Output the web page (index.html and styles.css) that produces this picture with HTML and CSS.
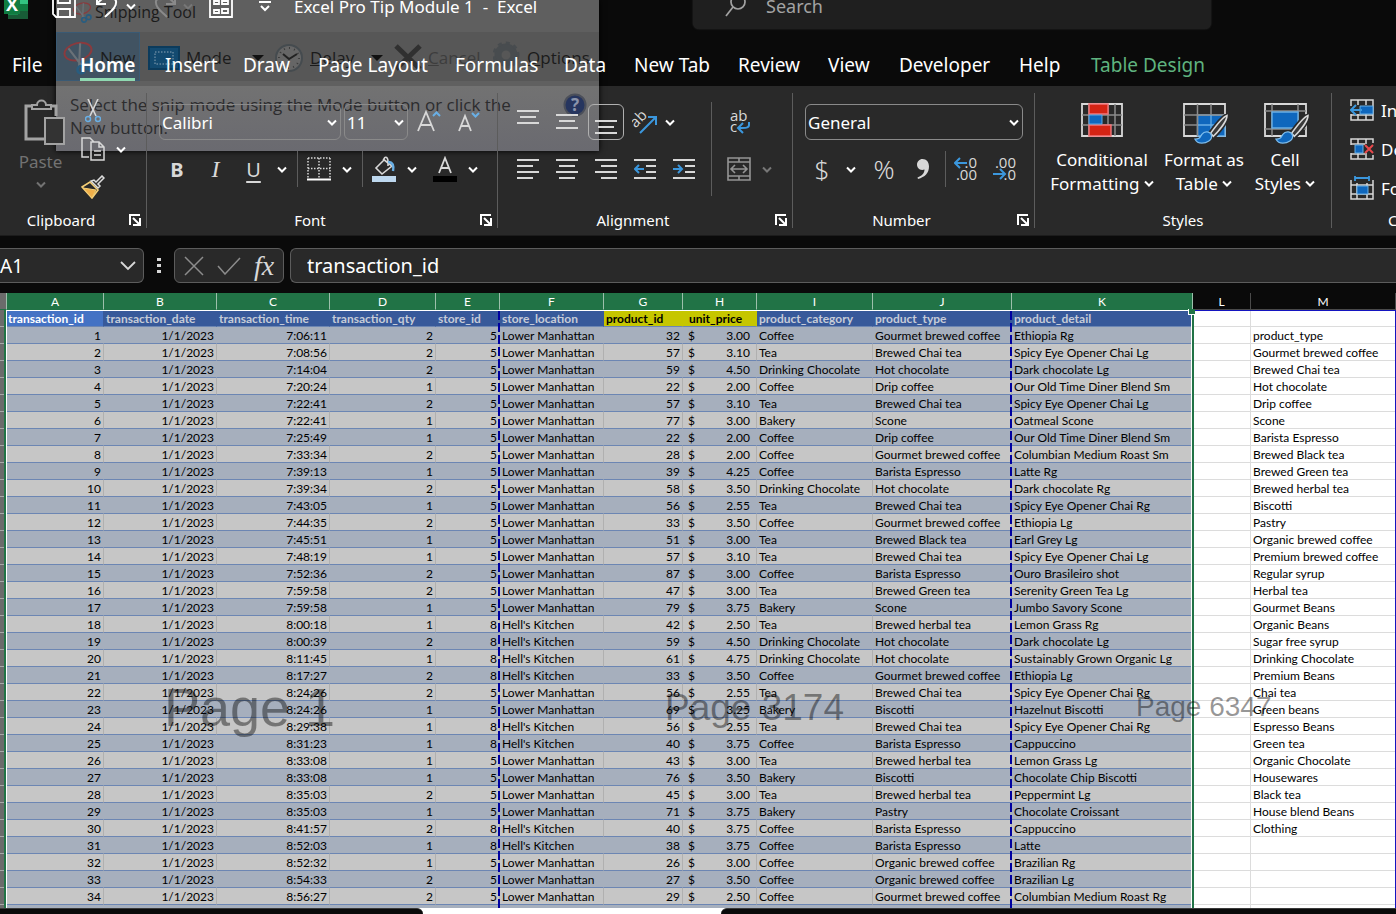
FILE: index.html
```html
<!DOCTYPE html>
<html lang="en">
<head>
<meta charset="utf-8">
<title>Excel Pro Tip Module 1 - Excel</title>
<link rel="stylesheet" href="styles.css">
</head>
<body>
<svg class="defs" aria-hidden="true">
  <symbol id="chev" viewBox="0 0 10 7"><path d="M1 1.500l4 4 4-4" fill="none" stroke="currentColor" stroke-width="2"/></symbol>
  <symbol id="launch" viewBox="0 0 12 12"><path d="M1 11V1h10M4 4l6 6M11 4v7H4" fill="none" stroke="#fff" stroke-width="2"/></symbol>
  <symbol id="brush" viewBox="0 0 36 32"><path d="M35 1C31 1 22 12 17 19l4 4C27 17 36 5 35 1z" fill="#292929" stroke="#292929" stroke-width="4"/><path d="M34 1.500C30 3 22 13 17 20l3 3C26 17 34 7 34 1.500z" fill="#3a3a3a" stroke="#d8d8d8" stroke-width="1.600"/><path d="M1 26c5 0 5-2 7-5 3-4 9-3 10 1 1 5-5 8-10 8-4 0-6-2-7-4z" fill="#0f67bd" stroke="#7cbcec" stroke-width="1.300"/></symbol>
  <symbol id="snip" viewBox="0 0 30 34"><ellipse cx="15" cy="11" rx="13" ry="8" transform="rotate(-14 15 11)" fill="none" stroke="#8b3a3d" stroke-width="1.800"/><path d="M6 8l13 17M17 3l-1 22" stroke="#6a7278" stroke-width="2"/><circle cx="18" cy="28" r="3.500" fill="none" stroke="#285d80" stroke-width="2.400"/><circle cx="25" cy="24" r="3.500" fill="none" stroke="#285d80" stroke-width="2.400"/></symbol>
</svg>

<aside class="snip" aria-label="Snipping Tool">
  <div class="snip-title"><svg width="20" height="23"><use href="#snip"/></svg><span>Snipping Tool</span></div>
  <div class="snip-bar">
    <button class="snip-btn snip-new"><svg width="32" height="36"><use href="#snip"/></svg>New</button>
    <button class="snip-btn snip-mode"><svg width="32" height="24" viewBox="0 0 32 24"><rect width="32" height="24" fill="#0c3b5c"/><rect x="2" y="2" width="28" height="20" fill="#134a70"/><rect x="7" y="6" width="18" height="12" fill="none" stroke="#8aa3b5" stroke-dasharray="1.500 1.500"/></svg>Mode<i class="tri"></i></button>
    <button class="snip-btn snip-delay"><svg width="30" height="30" viewBox="0 0 30 30"><circle cx="15" cy="15" r="13" fill="#666" stroke="#454b4f" stroke-width="2"/><circle cx="15" cy="15" r="10" fill="none" stroke="#3a3a3a" stroke-width="2" stroke-dasharray="1 4.200"/><path d="M9 11l6 5 8-5" fill="none" stroke="#222" stroke-width="2"/></svg><span><u>D</u>elay</span><i class="tri"></i></button>
    <button class="snip-btn snip-cancel"><svg width="28" height="29" viewBox="0 0 28 29"><path d="M2 3l24 23M26 3L2 26" stroke="#303030" stroke-width="5"/></svg><span><u>C</u>ancel</span></button>
    <button class="snip-btn snip-options"><svg width="28" height="34" viewBox="0 0 28 34"><circle cx="13" cy="14" r="8" fill="none" stroke="#484c4f" stroke-width="7"/><circle cx="13" cy="14" r="12" fill="none" stroke="#484c4f" stroke-width="3" stroke-dasharray="4 4"/></svg><span><u>O</u>ptions</span></button>
  </div>
  <div class="snip-body">
    <p>Select the snip mode using the Mode button or click the New button.</p>
    <svg width="24" height="24" viewBox="0 0 24 24"><circle cx="12" cy="12" r="10.500" fill="#26355f" stroke="#4b4f5a" stroke-width="2"/><text x="12" y="18" text-anchor="middle" class="help-mark">?</text></svg>
  </div>
</aside>

<header class="titlebar">
  <svg class="logo" width="24" height="30" viewBox="0 0 24 30"><path d="M8 0h16v28H4V16z" fill="#185c37"/><path d="M14 0h10v13H14z" fill="#33c481"/><path d="M14 13h10v7H14z" fill="#107c41"/><path d="M4 19h10v5H4z" fill="#17864b"/><rect width="16" height="23" fill="#107c41"/><text x="8" y="20" text-anchor="middle" class="logo-x">X</text></svg>
  <svg class="t-save" width="24" height="24" viewBox="0 0 24 24"><path d="M1 1h18l4 4v18H4l-3-3zM6 1v8h12V1M6 23v-8h12v8" fill="none" stroke="#fff" stroke-width="1.800"/></svg>
  <svg class="t-undo" width="24" height="24" viewBox="0 0 24 24"><path d="M2 2v8h9M2 10C10 0 18 1 21 7c1 6-5 10-11 16" fill="none" stroke="#fff" stroke-width="2"/></svg>
  <svg class="ch" width="10" height="7"><use href="#chev"/></svg>
  <svg class="t-redo" width="24" height="24" viewBox="0 0 24 24"><path d="M22 2v8h-9M22 10C14 0 6 1 3 7c-1 6 5 10 11 16" fill="none" stroke="#8a8a8a" stroke-width="2"/></svg>
  <svg class="ch dim" width="10" height="7"><use href="#chev"/></svg>
  <svg class="t-form" width="24" height="24" viewBox="0 0 24 24"><path d="M1 1h22v22H1zM5 7h5v3H5zM13 7h6v3h-6zM5 16h5v3H5zM13 15h6v4h-6z" fill="none" stroke="#fff" stroke-width="1.800"/></svg>
  <svg class="t-more" width="12" height="11" viewBox="0 0 12 11"><path d="M0 1h12M2 5l4 4 4-4" fill="none" stroke="#fff" stroke-width="2"/></svg>
  <h1>Excel Pro Tip Module 1 &nbsp;- &nbsp;Excel</h1>
  <label class="search"><svg width="22" height="24" viewBox="0 0 22 24"><circle cx="13" cy="8" r="7" fill="none" stroke="#a3a3a3" stroke-width="1.700"/><path d="M8 13l-7 9" stroke="#a3a3a3" stroke-width="1.700"/></svg><input type="text" placeholder="Search" aria-label="Search"></label>
</header>

<nav class="tabs">
  <button>File</button><button class="active">Home</button><button>Insert</button><button>Draw</button><button>Page Layout</button><button>Formulas</button><button>Data</button><button>New Tab</button><button>Review</button><button>View</button><button>Developer</button><button>Help</button><button class="ctx">Table Design</button>
</nav>

<main class="ribbon">
  <section class="group clipboard">
    <div class="content">
      <button class="paste"><svg width="42" height="46" viewBox="0 0 42 46"><path d="M8 7H2v33h18M26 7h6v10" fill="none" stroke="#a3a3a3" stroke-width="3"/><path d="M8 10V6h5c0-6 9-6 9 0h5v4z" fill="none" stroke="#a3a3a3" stroke-width="2"/><path d="M21 19h19v26H21z" fill="#333" stroke="#a3a3a3" stroke-width="2"/></svg><span>Paste</span><svg class="ch" width="10" height="7"><use href="#chev"/></svg></button>
      <div class="clip-tools">
        <button aria-label="Cut"><svg width="16" height="24" viewBox="0 0 16 24"><path d="M3 0l8 17M13 0L5 17" stroke="#d8d8d8" stroke-width="1.600"/><circle cx="3" cy="20" r="2.500" fill="none" stroke="#69afe5" stroke-width="1.500"/><circle cx="13" cy="20" r="2.500" fill="none" stroke="#69afe5" stroke-width="1.500"/></svg></button>
        <button aria-label="Copy"><svg width="24" height="24" viewBox="0 0 24 24"><path d="M8 20H1V1h8l4 4M10 5h8l5 5v13H10zM18 5v5h5M13 14h7M13 18h7" fill="none" stroke="#d8d8d8" stroke-width="1.500"/></svg><svg class="ch" width="10" height="7"><use href="#chev"/></svg></button>
        <button aria-label="Format Painter"><svg width="24" height="24" viewBox="0 0 24 24"><path d="M1 12l8-5 8 8-6 8z" fill="#292929" stroke="#f5cf76" stroke-width="1.600"/><path d="M2 13l13 2-4 8z" fill="#f0b04a" stroke="#f5cf76"/><path d="M10 6l7 7 2-2-2-2 6-6-2-2-6 6-2-2z" fill="#333" stroke="#ddd" stroke-width="1.500"/></svg></button>
      </div>
    </div>
    <footer><span>Clipboard</span><button aria-label="Clipboard options"><svg width="12" height="12"><use href="#launch"/></svg></button></footer>
  </section>

  <section class="group font">
    <div class="content stack">
      <div class="row font-1">
        <span class="combo"><select aria-label="Font"><option>Calibri</option></select><svg class="ch" width="10" height="7"><use href="#chev"/></svg></span>
        <span class="combo"><select aria-label="Font size"><option>11</option></select><svg class="ch" width="10" height="7"><use href="#chev"/></svg></span>
        <button aria-label="Increase font size"><svg width="24" height="24" viewBox="0 0 24 24"><path d="M1 21L9 2l8 19M4 15h10" fill="none" stroke="#d8d8d8" stroke-width="1.800"/><path d="M16 6l3.500-3.500L23 6" fill="none" stroke="#69afe5" stroke-width="2"/></svg></button>
        <button aria-label="Decrease font size"><svg width="24" height="24" viewBox="0 0 24 24"><path d="M3 21L9 6l6 15M5 16h8" fill="none" stroke="#d8d8d8" stroke-width="1.800"/><path d="M16 3l3.500 3.500L23 3" fill="none" stroke="#69afe5" stroke-width="2"/></svg></button>
      </div>
      <div class="row font-2">
        <button class="glyph b">B</button><button class="glyph i">I</button><button class="glyph u">U</button><svg class="ch" width="10" height="7"><use href="#chev"/></svg>
        <i class="bar"></i>
        <button aria-label="Borders"><svg width="24" height="24" viewBox="0 0 24 24"><path d="M1 1h22M1 1v20M23 1v20M12 1v20M1 11.500h22" fill="none" stroke="#d8d8d8" stroke-width="1.500" stroke-dasharray="1.500 1.500"/><path d="M0 22.500h24" stroke="#fff" stroke-width="2"/></svg></button><svg class="ch" width="10" height="7"><use href="#chev"/></svg>
        <i class="bar"></i>
        <button aria-label="Fill color"><svg width="24" height="26" viewBox="0 0 24 26"><path d="M11 3l9 7-10 8-6-6 8-8c0-4 4-4 4 2v4" fill="none" stroke="#d8d8d8" stroke-width="1.600"/><path d="M16 6c5 0 6 4 5 9" fill="none" stroke="#69afe5" stroke-width="2.500"/><path d="M0 20h24v6H0z" fill="#bdd7ee"/></svg></button><svg class="ch" width="10" height="7"><use href="#chev"/></svg>
        <button aria-label="Font color"><svg width="24" height="26" viewBox="0 0 24 26"><path d="M6 17l6-15 6 15M8 12h8" fill="none" stroke="#d8d8d8" stroke-width="1.800"/><path d="M0 20h24v6H0z" fill="#000"/></svg></button><svg class="ch" width="10" height="7"><use href="#chev"/></svg>
      </div>
    </div>
    <footer><span>Font</span><button aria-label="Font options"><svg width="12" height="12"><use href="#launch"/></svg></button></footer>
  </section>

  <section class="group alignment">
    <div class="content">
      <div class="stack">
        <div class="row al-1">
          <button aria-label="Top align"><svg class="ln" width="22" height="24" viewBox="0 0 22 24"><path d="M0 1h22M3 7h16M0 13h22"/></svg></button>
          <button aria-label="Middle align"><svg class="ln" width="22" height="24" viewBox="0 0 22 24"><path d="M0 5h22M3 11h16M0 18h22"/></svg></button>
          <button class="on" aria-label="Bottom align"><svg class="ln" width="22" height="24" viewBox="0 0 22 24"><path d="M0 11h22M3 17h16M0 23h22"/></svg></button>
          <button aria-label="Orientation"><svg width="25" height="25" viewBox="0 0 25 25"><text x="3" y="17" transform="rotate(-45 5 17)" class="ab">ab</text><path d="M8 23L23 8M16 7h8v8" fill="none" stroke="#3b97dd" stroke-width="2"/></svg></button>
          <svg class="ch" width="10" height="7"><use href="#chev"/></svg>
        </div>
        <div class="row al-2">
          <button aria-label="Align left"><svg class="ln" width="22" height="20" viewBox="0 0 22 20"><path d="M0 1h22M0 7h16M0 13h22M0 19h16"/></svg></button>
          <button aria-label="Center"><svg class="ln" width="22" height="20" viewBox="0 0 22 20"><path d="M0 1h22M3 7h16M0 13h22M3 19h16"/></svg></button>
          <button aria-label="Align right"><svg class="ln" width="22" height="20" viewBox="0 0 22 20"><path d="M0 1h22M6 7h16M0 13h22M6 19h16"/></svg></button>
          <button aria-label="Decrease indent"><svg class="ln" width="22" height="20" viewBox="0 0 22 20"><path d="M0 1h22M12 7h10M12 13h10M0 19h22"/><path class="blue" d="M10 10H1M5 6l-4 4 4 4"/></svg></button>
          <button aria-label="Increase indent"><svg class="ln" width="22" height="20" viewBox="0 0 22 20"><path d="M0 1h22M12 7h10M12 13h10M0 19h22"/><path class="blue" d="M0 10h9M5 6l4 4-4 4"/></svg></button>
        </div>
      </div>
      <i class="bar tall"></i>
      <div class="stack">
        <div class="row al-3"><button aria-label="Wrap text"><svg width="22" height="26" viewBox="0 0 22 26"><text x="2" y="12" class="ab">ab</text><text x="2" y="23" class="ab">c</text><path d="M21 13v3c0 3-3 3-10 3M15 14l-5 5 5 5" fill="none" stroke="#3b97dd" stroke-width="2"/></svg></button></div>
        <div class="row al-3"><button aria-label="Merge"><svg width="24" height="24" viewBox="0 0 24 24"><path d="M1 1h22v22H1zM1 5h22M1 19h22M12 1v4M12 19v4M4 12h16M8 8l-4 4 4 4M16 8l4 4-4 4" fill="none" stroke="#949494" stroke-width="1.600"/></svg></button><svg class="ch dim" width="10" height="7"><use href="#chev"/></svg></div>
      </div>
    </div>
    <footer><span>Alignment</span><button aria-label="Alignment options"><svg width="12" height="12"><use href="#launch"/></svg></button></footer>
  </section>

  <section class="group number">
    <div class="content stack">
      <div class="row"><span class="combo wide"><select aria-label="Number format"><option>General</option></select><svg class="ch" width="10" height="7"><use href="#chev"/></svg></span></div>
      <div class="row num-2">
        <button class="glyph big">$</button><svg class="ch" width="10" height="7"><use href="#chev"/></svg><button class="glyph big">%</button>
        <button aria-label="Comma style"><svg width="12" height="20" viewBox="0 0 12 20"><path d="M5.500 0C9.500 0 12 3 12 7.500 12 14 8 18 1 20l-.5-1.500C5 17 7.500 14 7.500 10.500 3 12 0 9 0 5.500 0 2.500 2.500 0 5.500 0z" fill="#d8d8d8"/></svg></button>
        <i class="bar"></i>
        <button aria-label="Increase decimal"><svg width="24" height="26" viewBox="0 0 24 26"><text x="23" y="12" text-anchor="end" class="dec">.0</text><text x="23" y="24" text-anchor="end" class="dec">.00</text><path d="M13 7H1M6 2L1 7l5 5" fill="none" stroke="#3b97dd" stroke-width="2"/></svg></button>
        <button aria-label="Decrease decimal"><svg width="24" height="26" viewBox="0 0 24 26"><text x="23" y="12" text-anchor="end" class="dec">.00</text><text x="23" y="24" text-anchor="end" class="dec">.0</text><path d="M0 18h12M7 13l5 5-5 5" fill="none" stroke="#3b97dd" stroke-width="2"/></svg></button>
      </div>
    </div>
    <footer><span>Number</span><button aria-label="Number options"><svg width="12" height="12"><use href="#launch"/></svg></button></footer>
  </section>

  <section class="group styles">
    <div class="content">
      <button class="tile t1"><svg width="42" height="42" viewBox="0 0 42 42"><path d="M1 1h40v32H1z" fill="none" stroke="#d8d8d8" stroke-width="1.800"/><path d="M8 1v32M34 1v32M27 1v32M1 12h40M1 22h40" stroke="#8c8c8c" stroke-width="1.500"/><path d="M8 1h19v10H8zM8 22h22v11H8z" fill="#d42314" stroke="#f2777b" stroke-width="1.400"/><path d="M8 12h13v9H8z" fill="#0f67bd" stroke="#5ea9e6"/></svg><span>Conditional<br>Formatting <svg class="ch" width="10" height="7"><use href="#chev"/></svg></span></button>
      <button class="tile t2"><svg width="46" height="42" viewBox="0 0 46 42"><path d="M1 1h41v32H1z" fill="none" stroke="#d8d8d8" stroke-width="1.800"/><path d="M14.500 12H42v21H14.500z" fill="#0f67bd" stroke="#69afe5" stroke-width="1.400"/><path d="M14.500 1v32M28 1v11M1 12h41M1 22h14" stroke="#8c8c8c" stroke-width="1.500"/><path d="M28 12v21M15 22h27" stroke="#69afe5" stroke-width="1.300"/><use href="#brush" x="11" y="11" width="35" height="31"/></svg><span>Format as<br>Table <svg class="ch" width="10" height="7"><use href="#chev"/></svg></span></button>
      <button class="tile t3"><svg width="46" height="42" viewBox="0 0 46 42"><path d="M1 1h41v32H1z" fill="none" stroke="#d8d8d8" stroke-width="1.800"/><path d="M8 1v32M34 1v32M1 8h41M1 26h41" stroke="#8c8c8c" stroke-width="1.500"/><path d="M8 9h26v16H8z" fill="#0f67bd" stroke="#69afe5" stroke-width="1.400"/><use href="#brush" x="11" y="11" width="35" height="31"/></svg><span>Cell<br>Styles <svg class="ch" width="10" height="7"><use href="#chev"/></svg></span></button>
    </div>
    <footer><span>Styles</span></footer>
  </section>

  <section class="group cells">
    <div class="content cell-list">
      <button><svg width="24" height="24" viewBox="0 0 24 24"><path d="M1 8V2h22v20H1v-6M8 2v5M16 2v5M8 16v6M16 16v6M1 17h22" fill="none" stroke="#d8d8d8" stroke-width="1.500"/><path d="M10 8h13v8H10z" fill="#0f67bd" stroke="#69afe5"/><path d="M12 12H1M6 7l-5 5 5 5" fill="none" stroke="#3b97dd" stroke-width="2"/></svg>Insert</button>
      <button><svg width="24" height="24" viewBox="0 0 24 24"><path d="M1 8V2h22v4M1 16v6h22v-4M8 2v5M16 2v5M8 16v6M16 16v6M1 7h14M1 17h14" fill="none" stroke="#d8d8d8" stroke-width="1.500"/><path d="M5 8h8v8H5z" fill="#0f67bd" stroke="#69afe5"/><path d="M15 8l8 8M23 8l-8 8" fill="none" stroke="#e8484b" stroke-width="2"/></svg>Delete</button>
      <button><svg width="24" height="24" viewBox="0 0 24 24"><path d="M1 4v19h22V4M7 7v16M17 7v16M1 9h22M1 18h22" fill="none" stroke="#d8d8d8" stroke-width="1.500"/><path d="M7 10h11v8H7z" fill="#0f67bd" stroke="#69afe5"/><path d="M5 2h14M5 0v5M19 0v5" fill="none" stroke="#3b97dd" stroke-width="1.800"/></svg>Format</button>
    </div>
    <footer><span>Cells</span></footer>
  </section>
</main>

<div class="formula-row">
  <div class="namebox"><input type="text" value="A1" aria-label="Name box"><svg width="16" height="10" viewBox="0 0 16 10"><path d="M1 1l7 7 7-7" fill="none" stroke="#d8d8d8" stroke-width="1.800"/></svg></div>
  <svg class="dots" width="4" height="16" viewBox="0 0 4 16"><path d="M0 0h4v3H0zM0 6h4v3H0zM0 12h4v3H0z" fill="#d8d8d8"/></svg>
  <div class="fxbox">
    <svg width="20" height="20" viewBox="0 0 20 20"><path d="M1 1l18 18M19 1L1 19" stroke="#8c8c8c" stroke-width="1.500"/></svg>
    <svg width="24" height="18" viewBox="0 0 24 18"><path d="M1 9l7 8L23 1" fill="none" stroke="#8c8c8c" stroke-width="1.500"/></svg>
    <button class="fx">fx</button>
  </div>
  <input class="formula" type="text" value="transaction_id" aria-label="Formula bar">
</div>

<div class="sheet">
  <table>
    <colgroup><col class="c0"><col class="ca"><col class="cb"><col class="cc"><col class="cd"><col class="ce"><col class="cf"><col class="cg"><col class="ch-col"><col class="ci"><col class="cj"><col class="ck"><col class="cl"><col></colgroup>
    <thead><tr><th class="corner"></th><th>A</th><th>B</th><th>C</th><th>D</th><th>E</th><th>F</th><th>G</th><th>H</th><th>I</th><th>J</th><th>K</th><th class="off">L</th><th class="off">M</th></tr></thead>
    <tbody id="rows"></tbody>
  </table>
  <div class="selection"></div>
  <div class="print-edge"></div>
  <i class="break b1"></i><i class="break b2"></i>
  <span class="mark m1">Page 1</span><span class="mark m2">Page 3174</span><span class="mark m3">Page 6347</span>
</div>
<div class="sheet-tabs"><div class="st-left"></div><div class="st-active"></div><div class="st-right"></div></div>
<script src="sheet.js"></script>
</body>
</html>
```

FILE: styles.css
```css
* { box-sizing: border-box; }
body { margin: 0; height: 100vh; overflow: hidden; display: flex; flex-direction: column; position: relative; background: #0a0a0a; color: #fff; font-family: "Noto Sans", "Open Sans", sans-serif; font-size: 17px; }
button, input, select { font: inherit; color: inherit; background: none; border: 0; padding: 0; margin: 0; }
button { display: flex; align-items: center; justify-content: center; white-space: nowrap; }
svg { flex: none; display: block; }
.defs { position: absolute; width: 0; height: 0; }
.ch { color: #fff; }
.dim { color: #777; }

/* Fading snipping window */
.snip { position: absolute; left: 56px; top: 0; width: 543px; color: #1b1b1b; background: #5f5f5f; z-index: 1; box-shadow: 0 0 6px #000; font-family: "Open Sans", sans-serif; font-size: 17px; }
.snip-title { display: flex; align-items: center; height: 32px; gap: 3px; padding: 0 0 8px 16px; font-size: 16px; }
.snip-bar { display: flex; height: 49px; background: #575757; }
.snip-btn { height: 49px; gap: 6px; padding-top: 2px; justify-content: flex-start; }
.snip-new { width: 84px; padding-left: 5px; background: #415362; border: 1px solid #3a5a74; }
.snip-mode { width: 127px; padding-left: 8px; }
.snip-delay { width: 118px; padding-left: 7px; }
.snip-cancel { width: 105px; padding-left: 9px; color: #3d3d3d; }
.snip-options { padding-left: 3px; }
.tri { margin-left: auto; margin-right: 3px; border: 6px solid transparent; border-top-color: #111; border-bottom: 0; }
.snip-delay .tri { margin-right: 2px; }
.snip-body { display: flex; height: 70px; padding: 12px 12px 0 14px; justify-content: space-between; background: linear-gradient(#606060 5px, #727272 5px, #6a6a70); color: #2c2c2e; }
.snip-body p { margin: 0; width: 450px; line-height: 23px; }
.help-mark { font: bold 17px "Noto Sans", sans-serif; fill: #8b93ab; }

/* Title bar */
.titlebar { display: flex; align-items: center; height: 46px; margin-top: -17px; flex: none; padding-left: 4px; position: relative; z-index: 2; }
.t-save { margin-left: 24px; }
.t-undo { margin-left: 19px; margin-right: 7px; }
.t-redo { margin-left: 17px; margin-right: 6px; }
.t-form { margin-left: 16px; }
.t-more { margin-left: 26px; margin-right: 23px; }
.logo-x { font: bold 18px "Open Sans", sans-serif; fill: #fff; }
.titlebar h1 { margin: 0; width: 399px; font-size: 17px; font-weight: 400; white-space: nowrap; }
.search { display: flex; align-items: center; gap: 19px; width: 518px; height: 46px; padding-left: 32px; background: #1f1f1f; border-radius: 6px; box-shadow: 0 0 2px #333; }
.search input { flex: 1; min-width: 0; font-size: 18px; }
.search input::placeholder { color: #a3a3a3; opacity: 1; }

/* Ribbon tabs */
.tabs { display: grid; grid-template-columns: 68px 85px 78px 75px 137px 109px 70px 104px 90px 71px 120px 72px auto; justify-content: start; justify-items: start; padding: 21px 0 5px 12px; position: relative; z-index: 2; font-size: 19px; }
.tabs button { height: 31px; padding-top: 2px; border-bottom: 3px solid transparent; }
.tabs .active { font-weight: 600; border-color: #8fd9b2; }
.tabs .ctx { color: #5fb37f; }

/* Ribbon */
.ribbon { display: flex; height: 150px; flex: none; background: #292929; border-bottom: 1px solid #1c1c1c; overflow: hidden; }
.group { display: flex; flex-direction: column; flex: none; height: 135px; margin-top: 7px; border-right: 1px solid #5c5c5c; position: relative; z-index: 2; }
.content { display: flex; height: 120px; padding-top: 11px; }
.stack { display: flex; flex-direction: column; gap: 11px; }
.row { display: grid; height: 36px; align-items: center; justify-items: center; }
.row button { width: 36px; height: 36px; }
.group footer { display: flex; align-items: center; height: 14px; font-size: 15px; line-height: 14px; }
.group footer span { flex: 1; text-align: center; }
.group footer button { width: 24px; padding-right: 5px; justify-content: flex-end; }
.clipboard { width: 147px; }
.font { width: 351px; }
.alignment { width: 295px; }
.number { width: 242px; }
.styles { width: 297px; }
.cells { width: 140px; border: 0; }

.clipboard .content { padding-top: 6px; }
.paste { flex-direction: column; justify-content: flex-start; width: 81px; padding-left: 8px; color: #727272; }
.paste span { line-height: 24px; margin: 5px 8px 7px 0; }
.paste .ch { color: #727272; margin-right: 8px; }
.clip-tools { display: flex; flex-direction: column; gap: 14px; }
.clip-tools button { height: 24px; gap: 11px; justify-content: flex-start; }
.clip-tools button:first-child { padding-left: 4px; }

.combo { position: relative; width: 100%; height: 36px; }
.combo select { appearance: none; width: 100%; height: 36px; border: 1px solid #8a8a8a; border-radius: 6px; padding-left: 2px; font-size: 17px; }
.combo option { color: #000; }
.combo .ch { position: absolute; right: 4px; top: 15px; }
.wide { width: 218px; }
.font-1 { grid-template-columns: 182px 64px 36px 36px; gap: 3px; margin-left: 12px; }
.font-2 { grid-template-columns: 38px 39px 37px 20px 10px 34px 22px 8px 36px 20px 46px 10px; margin-left: 11px; }
.bar { width: 1px; height: 36px; background: #5c5c5c; }
.tall { height: 94px; margin: -2px 3px 0 8px; }
.glyph { color: #d8d8d8; font-size: 20px; }
.glyph.b { font-weight: 700; }
.glyph.i { font-family: "Liberation Serif", serif; font-style: italic; font-size: 24px; }
.glyph.u { text-decoration: underline; text-underline-offset: 4px; text-decoration-thickness: 2px; }
.glyph.big { font-size: 26px; font-weight: 300; }

.alignment .content { padding-left: 10px; }
.al-1 { grid-template-columns: repeat(4, 39px) 12px; }
.al-2 { grid-template-columns: repeat(5, 39px); }
.al-3 { grid-template-columns: 48px 8px; }
.on { border: 1px solid #b0b0b0; border-radius: 6px; }
.ln path { fill: none; stroke: #d8d8d8; stroke-width: 2; }
.ln .blue { stroke: #3b97dd; }
.ab { font: 15px "Open Sans", sans-serif; fill: #d8d8d8; }
.dec { font: 15px "Open Sans", sans-serif; fill: #d8d8d8; }

.number .row:first-child { margin-left: 12px; justify-items: start; }
.num-2 { grid-template-columns: 34px 24px 42px 36px 8px 34px 44px; margin-left: 12px; }

.styles .content { padding: 10px 0 0 14px; }
.tile { flex-direction: column; justify-content: flex-start; gap: 3px; line-height: 24px; }
.tile .ch { display: inline-block; vertical-align: 3px; }
.t1 { width: 106px; }
.t2 { width: 98px; }
.t3 { width: 64px; }
.t2 > svg, .t3 > svg { margin-left: 4px; }
.cell-list { flex-direction: column; gap: 15px; padding: 5px 0 0 18px; }
.cell-list button { height: 24px; gap: 7px; justify-content: flex-start; }
.cells footer span { text-align: left; padding-left: 56px; }

/* Formula row */
.formula-row { display: flex; align-items: center; height: 57px; flex: none; padding: 2px 0 0; font-size: 20px; }
.namebox, .fxbox, .formula { height: 35px; background: #292929; border: 1px solid #5c5c5c; border-radius: 6px; }
.namebox { display: flex; align-items: center; width: 144px; padding-right: 7px; border-left: 0; border-radius: 0 6px 6px 0; }
.namebox input { flex: 1; min-width: 0; font-size: 19px; }
.dots { margin: 0 13px; }
.fxbox { display: flex; align-items: center; gap: 13px; width: 110px; padding-left: 9px; }
.fx { font: italic 28px "Liberation Serif", serif; color: #d8d8d8; }
.formula { flex: 1; min-width: 0; margin-left: 6px; padding-left: 16px; border-right: 0; border-radius: 6px 0 0 6px; }

/* Sheet */
.sheet { position: relative; flex: 1; min-height: 0; overflow: hidden; background: #fff; color: #000; font: 12px/15px Lato, "Open Sans", sans-serif; }
table { border-collapse: separate; border-spacing: 0; table-layout: fixed; width: 100%; }
.c0 { width: 7px; } .ca { width: 97px; } .cb, .cc { width: 113px; } .cd { width: 106px; } .ce { width: 64px; } .cf { width: 104px; } .cg { width: 79px; } .ch-col { width: 74px; } .ci { width: 116px; } .cj { width: 139px; } .ck { width: 181px; } .cl { width: 58px; }
th, td { height: 17px; padding: 1px 2px 0; white-space: nowrap; overflow: hidden; }
thead th { padding: 0; background: #217346; color: #fff; font-weight: 400; border-right: 1px solid #9dc0ac; border-bottom: 1px solid #217346; }
thead .corner { background: #6b6b6b; }
thead .off { background: #0a0a0a; border-color: #4a4a4a; }
tbody td { border-bottom: 1px solid #6c86b3; background: #a6afbd; border-right: 1px solid #a6afbd; }
tbody .even td { background: #c6c6c6; border-right-color: #b0b0b0; }
tbody .head td { background: #37599a; border-right-color: #37599a; color: #c6ccd8; font-weight: 700; }
tbody .head .first { background: #4472c4; color: #fff; padding-left: 1px; }
tbody .head .key { background: #c6c600; border-right-color: #c6c600; color: #000; }
tbody .head .price { padding-left: 6px; }
tbody tr .rh { background: #6b6b6b; border-color: #a8a8a8; padding: 0; }
tbody tr td.out, tbody .head td.out { background: #fff; border-color: #dcdcdc; color: #000; font-weight: 400; }
.num { text-align: right; }
.money { display: flex; justify-content: space-between; padding: 0 4px 0 3px; }
.selection { position: absolute; left: 4px; top: 17px; bottom: 0; width: 1190px; border: solid #217346; border-width: 0 2px; box-shadow: inset 1px 1px #fff, inset -1px 0 #fff; }
.selection::after { content: ""; position: absolute; right: -3px; top: -1px; width: 6px; height: 5px; background: #217346; border: solid #fff; border-width: 0 0 1px 1px; }
.print-edge { position: absolute; left: 1195px; right: 0; top: 17px; bottom: 0; border: solid #1414c0; border-width: 1px 1px 0 0; }
.break { position: absolute; top: 18px; bottom: 0; width: 2px; background: repeating-linear-gradient(#0000a0 0 9px, transparent 9px 12px); }
.b1 { left: 498px; }
.b2 { left: 1010px; }
.mark { position: absolute; top: 414px; transform: translateY(-50%); color: rgba(0, 0, 0, .41); font-family: "Liberation Sans", Arial, sans-serif; line-height: 1; white-space: nowrap; }
.m1 { left: 164px; font-size: 54px; }
.m2 { left: 665px; font-size: 37px; }
.m3 { left: 1136px; font-size: 28px; }

.sheet-tabs { display: flex; height: 6px; flex: none; background: #fff; }
.st-left { width: 423px; background: #0a0a0a; border-top: 1px solid #3a3a3a; border-radius: 0 6px 0 0; }
.st-active { width: 298px; }
.st-right { flex: 1; background: #0a0a0a; border-top: 1px solid #3a3a3a; border-radius: 6px 0 0 0; }
```

FILE: sheet.js
```js
const headings = ["transaction_id", "transaction_date", "transaction_time", "transaction_qty", "store_id", "store_location", "product_id", "unit_price", "product_category", "product_type", "product_detail"];
const headClass = { 0: "first", 6: "key", 7: "key price" };
const stores = { 5: "Lower Manhattan", 8: "Hell's Kitchen" };
const sales = `7:06:11|2|5|32|3.00|Coffee|Gourmet brewed coffee|Ethiopia Rg
7:08:56|2|5|57|3.10|Tea|Brewed Chai tea|Spicy Eye Opener Chai Lg
7:14:04|2|5|59|4.50|Drinking Chocolate|Hot chocolate|Dark chocolate Lg
7:20:24|1|5|22|2.00|Coffee|Drip coffee|Our Old Time Diner Blend Sm
7:22:41|2|5|57|3.10|Tea|Brewed Chai tea|Spicy Eye Opener Chai Lg
7:22:41|1|5|77|3.00|Bakery|Scone|Oatmeal Scone
7:25:49|1|5|22|2.00|Coffee|Drip coffee|Our Old Time Diner Blend Sm
7:33:34|2|5|28|2.00|Coffee|Gourmet brewed coffee|Columbian Medium Roast Sm
7:39:13|1|5|39|4.25|Coffee|Barista Espresso|Latte Rg
7:39:34|2|5|58|3.50|Drinking Chocolate|Hot chocolate|Dark chocolate Rg
7:43:05|1|5|56|2.55|Tea|Brewed Chai tea|Spicy Eye Opener Chai Rg
7:44:35|2|5|33|3.50|Coffee|Gourmet brewed coffee|Ethiopia Lg
7:45:51|1|5|51|3.00|Tea|Brewed Black tea|Earl Grey Lg
7:48:19|1|5|57|3.10|Tea|Brewed Chai tea|Spicy Eye Opener Chai Lg
7:52:36|2|5|87|3.00|Coffee|Barista Espresso|Ouro Brasileiro shot
7:59:58|2|5|47|3.00|Tea|Brewed Green tea|Serenity Green Tea Lg
7:59:58|1|5|79|3.75|Bakery|Scone|Jumbo Savory Scone
8:00:18|1|8|42|2.50|Tea|Brewed herbal tea|Lemon Grass Rg
8:00:39|2|8|59|4.50|Drinking Chocolate|Hot chocolate|Dark chocolate Lg
8:11:45|1|8|61|4.75|Drinking Chocolate|Hot chocolate|Sustainably Grown Organic Lg
8:17:27|2|8|33|3.50|Coffee|Gourmet brewed coffee|Ethiopia Lg
8:24:26|2|5|56|2.55|Tea|Brewed Chai tea|Spicy Eye Opener Chai Rg
8:24:26|1|5|69|3.25|Bakery|Biscotti|Hazelnut Biscotti
8:29:38|1|8|56|2.55|Tea|Brewed Chai tea|Spicy Eye Opener Chai Rg
8:31:23|1|8|40|3.75|Coffee|Barista Espresso|Cappuccino
8:33:08|1|5|43|3.00|Tea|Brewed herbal tea|Lemon Grass Lg
8:33:08|1|5|76|3.50|Bakery|Biscotti|Chocolate Chip Biscotti
8:35:03|2|5|45|3.00|Tea|Brewed herbal tea|Peppermint Lg
8:35:03|1|5|71|3.75|Bakery|Pastry|Chocolate Croissant
8:41:57|2|8|40|3.75|Coffee|Barista Espresso|Cappuccino
8:52:03|1|8|38|3.75|Coffee|Barista Espresso|Latte
8:52:32|1|5|26|3.00|Coffee|Organic brewed coffee|Brazilian Rg
8:54:33|2|5|27|3.50|Coffee|Organic brewed coffee|Brazilian Lg
8:56:27|2|5|29|2.50|Coffee|Gourmet brewed coffee|Columbian Medium Roast Rg`.split("\n");
const types = ["product_type", "Gourmet brewed coffee", "Brewed Chai tea", "Hot chocolate", "Drip coffee", "Scone", "Barista Espresso", "Brewed Black tea", "Brewed Green tea", "Brewed herbal tea", "Biscotti", "Pastry", "Organic brewed coffee", "Premium brewed coffee", "Regular syrup", "Herbal tea", "Gourmet Beans", "Organic Beans", "Sugar free syrup", "Drinking Chocolate", "Premium Beans", "Chai tea", "Green beans", "Espresso Beans", "Green tea", "Organic Chocolate", "Housewares", "Black tea", "House blend Beans", "Clothing"];

const cell = (text, cls = "") => `<td class="${cls}">${text}</td>`;
const line = (cells, cls, type = "") => `<tr class="${cls}">${cell("", "rh")}${cells}${cell("", "out")}${cell(type, "out")}</tr>`;

let html = line(headings.map((h, i) => cell(h, headClass[i])).join(""), "head");
sales.forEach((s, i) => {
  const [time, qty, store, id, price, category, type, detail] = s.split("|");
  const cells = [i + 1, "1/1/2023", time, qty, store].map(v => cell(v, "num")).join("")
    + cell(stores[store]) + cell(id, "num")
    + cell(`<span class="money"><span>$</span><span>${price}</span></span>`)
    + cell(category) + cell(type) + cell(detail);
  html += line(cells, i % 2 ? "even" : "", types[i]);
});
html += line(cell("").repeat(11), "");
document.getElementById("rows").innerHTML = html;
```
